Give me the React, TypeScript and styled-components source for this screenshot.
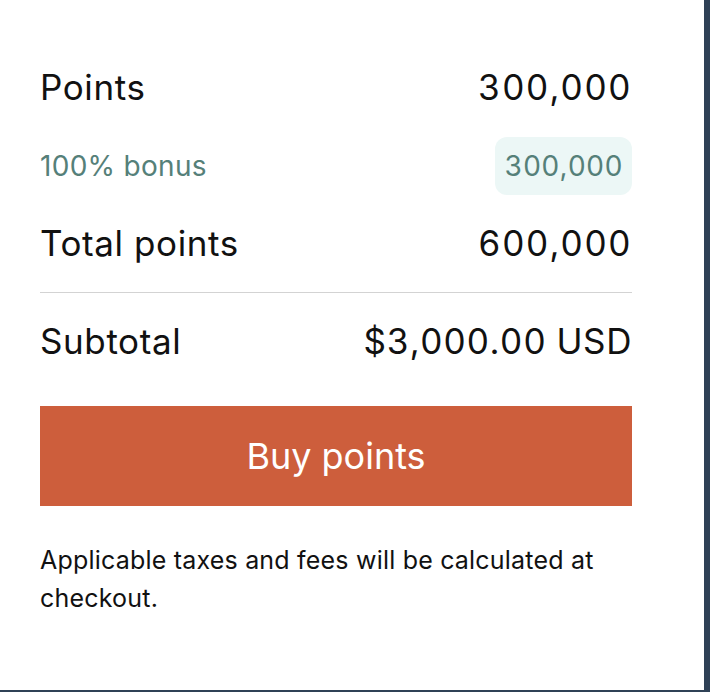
import React from "react";
import styled, { createGlobalStyle } from "styled-components";

const GlobalStyle = createGlobalStyle`
  html, body {
    margin: 0;
    padding: 0;
    background: #2f4156;
  }
  * {
    box-sizing: border-box;
  }
`;

const Panel = styled.div`
  width: 704px;
  height: 690px;
  background: #ffffff;
  padding: 60px 72px 0 40px;
  font-family: "Inter", "Liberation Sans", sans-serif;
  color: #111111;
`;

const Row = styled.div<{ $muted?: boolean; $height: number }>`
  display: flex;
  justify-content: space-between;
  align-items: center;
  height: ${(p) => p.$height}px;
  font-size: ${(p) => (p.$muted ? 28 : 35)}px;
  color: ${(p) => (p.$muted ? "#558079" : "#111111")};
  letter-spacing: ${(p) => (p.$muted ? 0.3 : 0.6)}px;
`;

const Value = styled.span`
  font-variant-numeric: tabular-nums;
`;

const WideValue = styled(Value)`
  letter-spacing: 1.2px;
`;

const BonusPill = styled(Value)`
  display: inline-flex;
  align-items: center;
  height: 58px;
  padding: 0 9px;
  border-radius: 12px;
  background: #ecf7f6;
`;

const Divider = styled.hr`
  border: none;
  border-top: 1px solid #d3d3d3;
  margin: 24px 0 0;
`;

const BuyButton = styled.button`
  display: block;
  width: 100%;
  height: 100px;
  margin-top: 17px;
  border: none;
  background: #cd5e3c;
  color: #ffffff;
  font-family: "Inter", "Liberation Sans", sans-serif;
  font-size: 36px;
  cursor: pointer;
`;

const Note = styled.p`
  margin: 35px 0 0;
  font-size: 25px;
  line-height: 38px;
  letter-spacing: 0.2px;
  color: #111111;
`;

const App = () => {
  return (
    <>
      <GlobalStyle />
      <Panel>
        <Row $height={54}>
          <span>Points</span>
          <WideValue>300,000</WideValue>
        </Row>
        <Row $height={104} $muted>
          <span>100% bonus</span>
          <BonusPill>300,000</BonusPill>
        </Row>
        <Row $height={50}>
          <span>Total points</span>
          <WideValue>600,000</WideValue>
        </Row>
        <Divider />
        <Row $height={96}>
          <span>Subtotal</span>
          <Value>$3,000.00 USD</Value>
        </Row>
        <BuyButton>Buy points</BuyButton>
        <Note>Applicable taxes and fees will be calculated at checkout.</Note>
      </Panel>
    </>
  );
};

export default App;
